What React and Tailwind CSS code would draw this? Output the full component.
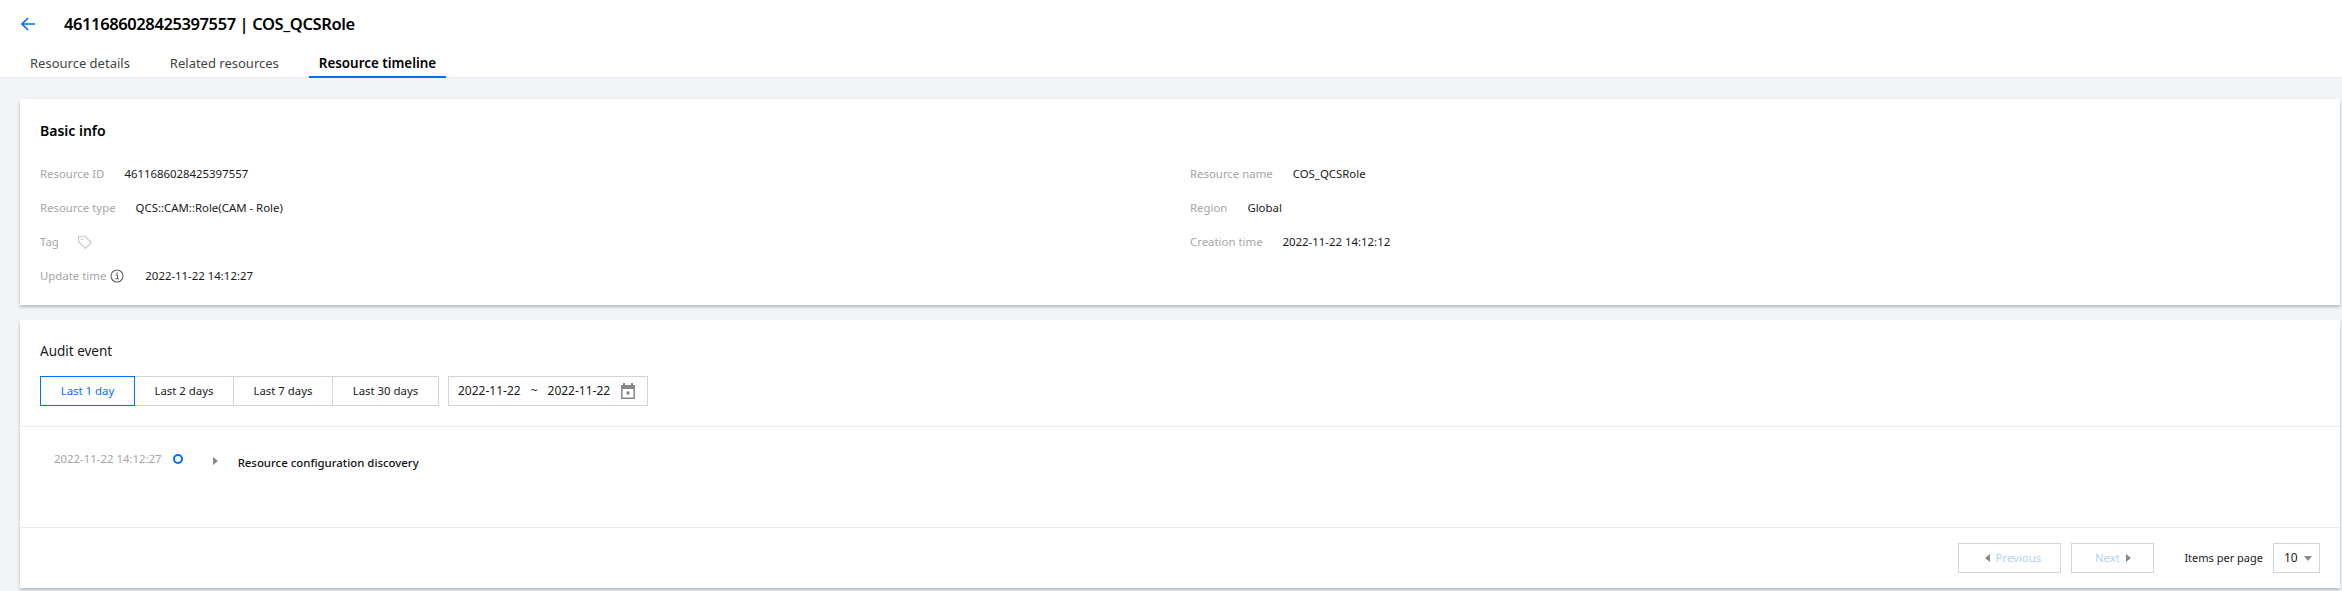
import React from "react";

const leftRows = [
  { label: "Resource ID", value: "4611686028425397557" },
  { label: "Resource type", value: "QCS::CAM::Role(CAM - Role)" },
  { label: "Tag", tag: true },
  { label: "Update time", value: "2022-11-22 14:12:27", info: true },
];

const rightRows = [
  { label: "Resource name", value: "COS_QCSRole" },
  { label: "Region", value: "Global" },
  { label: "Creation time", value: "2022-11-22 14:12:12" },
];

const ranges = ["Last 1 day", "Last 2 days", "Last 7 days", "Last 30 days"];

function BackArrow() {
  return (
    <svg width="16" height="16" viewBox="0 0 16 16" fill="none" stroke="#006eff" strokeWidth="1.6">
      <path d="M15 8H2M8 2L2 8l6 6" />
    </svg>
  );
}

function TagIcon() {
  return (
    <svg width="16" height="16" viewBox="0 0 16 16" fill="none" stroke="#c8c8c8" strokeWidth="1.2" className="ml-[18px]">
      <path d="M1.5 2.5l6-.5 7 6.5-6 6-7-7z" />
      <circle cx="5" cy="5.2" r="1" fill="#c8c8c8" stroke="none" />
    </svg>
  );
}

function InfoIcon() {
  return (
    <svg width="14" height="14" viewBox="0 0 14 14" fill="none" className="ml-1">
      <circle cx="7" cy="7" r="6" stroke="#666" strokeWidth="1.1" />
      <path d="M5.6 6h1.9v3.6M5.5 9.8h3.4" stroke="#666" strokeWidth="1.1" />
      <rect x="6.4" y="3.4" width="1.3" height="1.4" fill="#666" />
    </svg>
  );
}

function CalendarIcon() {
  return (
    <svg width="14" height="16" viewBox="0 0 14 16" fill="#888">
      <path d="M2 0h2v2h6V0h2v2h2v14H0V2h2zM1.5 6v8.5h11V6z" />
      <rect x="5.5" y="8.5" width="3" height="3" />
    </svg>
  );
}

function InfoRow({ row }) {
  return (
    <div className="flex h-[34px] items-center">
      <span className="text-[#a6a6a6]">{row.label}</span>
      {row.info && <InfoIcon />}
      {row.tag && <TagIcon />}
      {row.value && <span className={`text-[#1a1a1a] ${row.info ? "ml-[21px]" : "ml-5"}`}>{row.value}</span>}
    </div>
  );
}

export default function App() {
  return (
    <div className="h-[591px] overflow-hidden bg-[#f2f4f8] font-['Noto_Sans','Open_Sans',sans-serif] text-[11.4px] text-[#1a1a1a]">
      <header className="h-[78px] border-b border-[#e5e8ee] bg-white">
        <div className="flex h-12 items-center pl-5">
          <BackArrow />
          <h1 className="ml-[28px] text-[16.5px] font-semibold tracking-[-0.4px] text-black">4611686028425397557 | COS_QCSRole</h1>
        </div>
        <nav className="flex h-[30px]">
          <a className="flex items-center pl-[30px] pr-5 pt-0.5 text-[13px] text-[#444]">Resource details</a>
          <a className="flex items-center px-5 pt-0.5 text-[13px] text-[#444]">Related resources</a>
          <a className="ml-[10px] flex items-center border-b-2 border-[#006eff] px-[10px] pt-0.5 text-[13.4px] font-semibold text-black">Resource timeline</a>
        </nav>
      </header>

      <main className="flex flex-col gap-[15px] pl-5 pr-0.5 pt-[21px]">
        <section className="h-[206px] bg-white px-5 pt-[22px] shadow-[0_2px_3px_0_rgba(54,58,80,0.32)]">
          <h2 className="text-sm leading-5 font-semibold text-black">Basic info</h2>
          <div className="mt-4 grid grid-cols-2 gap-x-5">
            <div>{leftRows.map((row) => <InfoRow key={row.label} row={row} />)}</div>
            <div>{rightRows.map((row) => <InfoRow key={row.label} row={row} />)}</div>
          </div>
        </section>

        <section className="h-[268px] bg-white shadow-[0_2px_3px_0_rgba(54,58,80,0.32)]">
          <div className="h-[107px] border-b border-[#e7eaef] px-5 pt-[21px]">
            <h2 className="text-[13.5px] leading-5 text-[#1a1a1a]">Audit event</h2>
            <div className="mt-[15px] flex">
              {ranges.map((range, index) => (
                <button
                  key={range}
                  className={`h-[30px] border ${index === 3 ? "w-[107px]" : index === 0 ? "w-[95px]" : "w-[100px]"} ${index > 0 ? "-ml-px" : ""} ${index === 0 ? "relative z-10 border-[#006eff] text-[#006eff]" : "border-[#cfd5de]"}`}
                >
                  {range}
                </button>
              ))}
              <div className="ml-[9px] flex h-[30px] w-[200px] items-center border border-[#cfd5de] pl-[9px] text-xs">
                <span>2022-11-22</span>
                <span className="mx-[10px]">~</span>
                <span>2022-11-22</span>
                <span className="ml-[11px] flex"><CalendarIcon /></span>
              </div>
            </div>
          </div>

          <div className="flex h-[101px] items-start border-b border-[#e7eaef] pl-[34px] pt-[23px]">
            <span className="mt-px leading-4 text-[#a6a6a6]">2022-11-22 14:12:27</span>
            <span className="ml-[11px] mt-1 size-[10px] rounded-full border-2 border-[#006eff]" />
            <span className="ml-[30px] mt-[7px] h-0 w-0 border-y-4 border-l-[5px] border-y-transparent border-l-[#888]" />
            <span className="ml-5 mt-[5px] leading-4 font-medium text-[#111]">Resource configuration discovery</span>
          </div>

          <div className="flex items-center justify-end pr-5 pt-[15px]">
            <button className="flex h-[30px] w-[103px] items-center justify-center gap-[6px] border border-[#cfd5de] pl-[6px] text-[#b5d0f7]">
              <span className="h-0 w-0 border-y-4 border-r-[5px] border-y-transparent border-r-[#888]" />
              Previous
            </button>
            <button className="ml-[10px] flex h-[30px] w-[83px] items-center justify-center gap-[6px] border border-[#cfd5de] text-[#b5d0f7]">
              Next
              <span className="h-0 w-0 border-y-4 border-l-[5px] border-y-transparent border-l-[#888]" />
            </button>
            <span className="ml-[30px] text-[11px]">Items per page</span>
            <div className="ml-[10px] flex h-[30px] w-[47px] items-center border border-[#cfd5de] pl-[10px] text-xs">
              10
              <span className="ml-[6px] h-0 w-0 border-x-[4px] border-t-[5px] border-x-transparent border-t-[#888]" />
            </div>
          </div>
        </section>
      </main>
    </div>
  );
}
